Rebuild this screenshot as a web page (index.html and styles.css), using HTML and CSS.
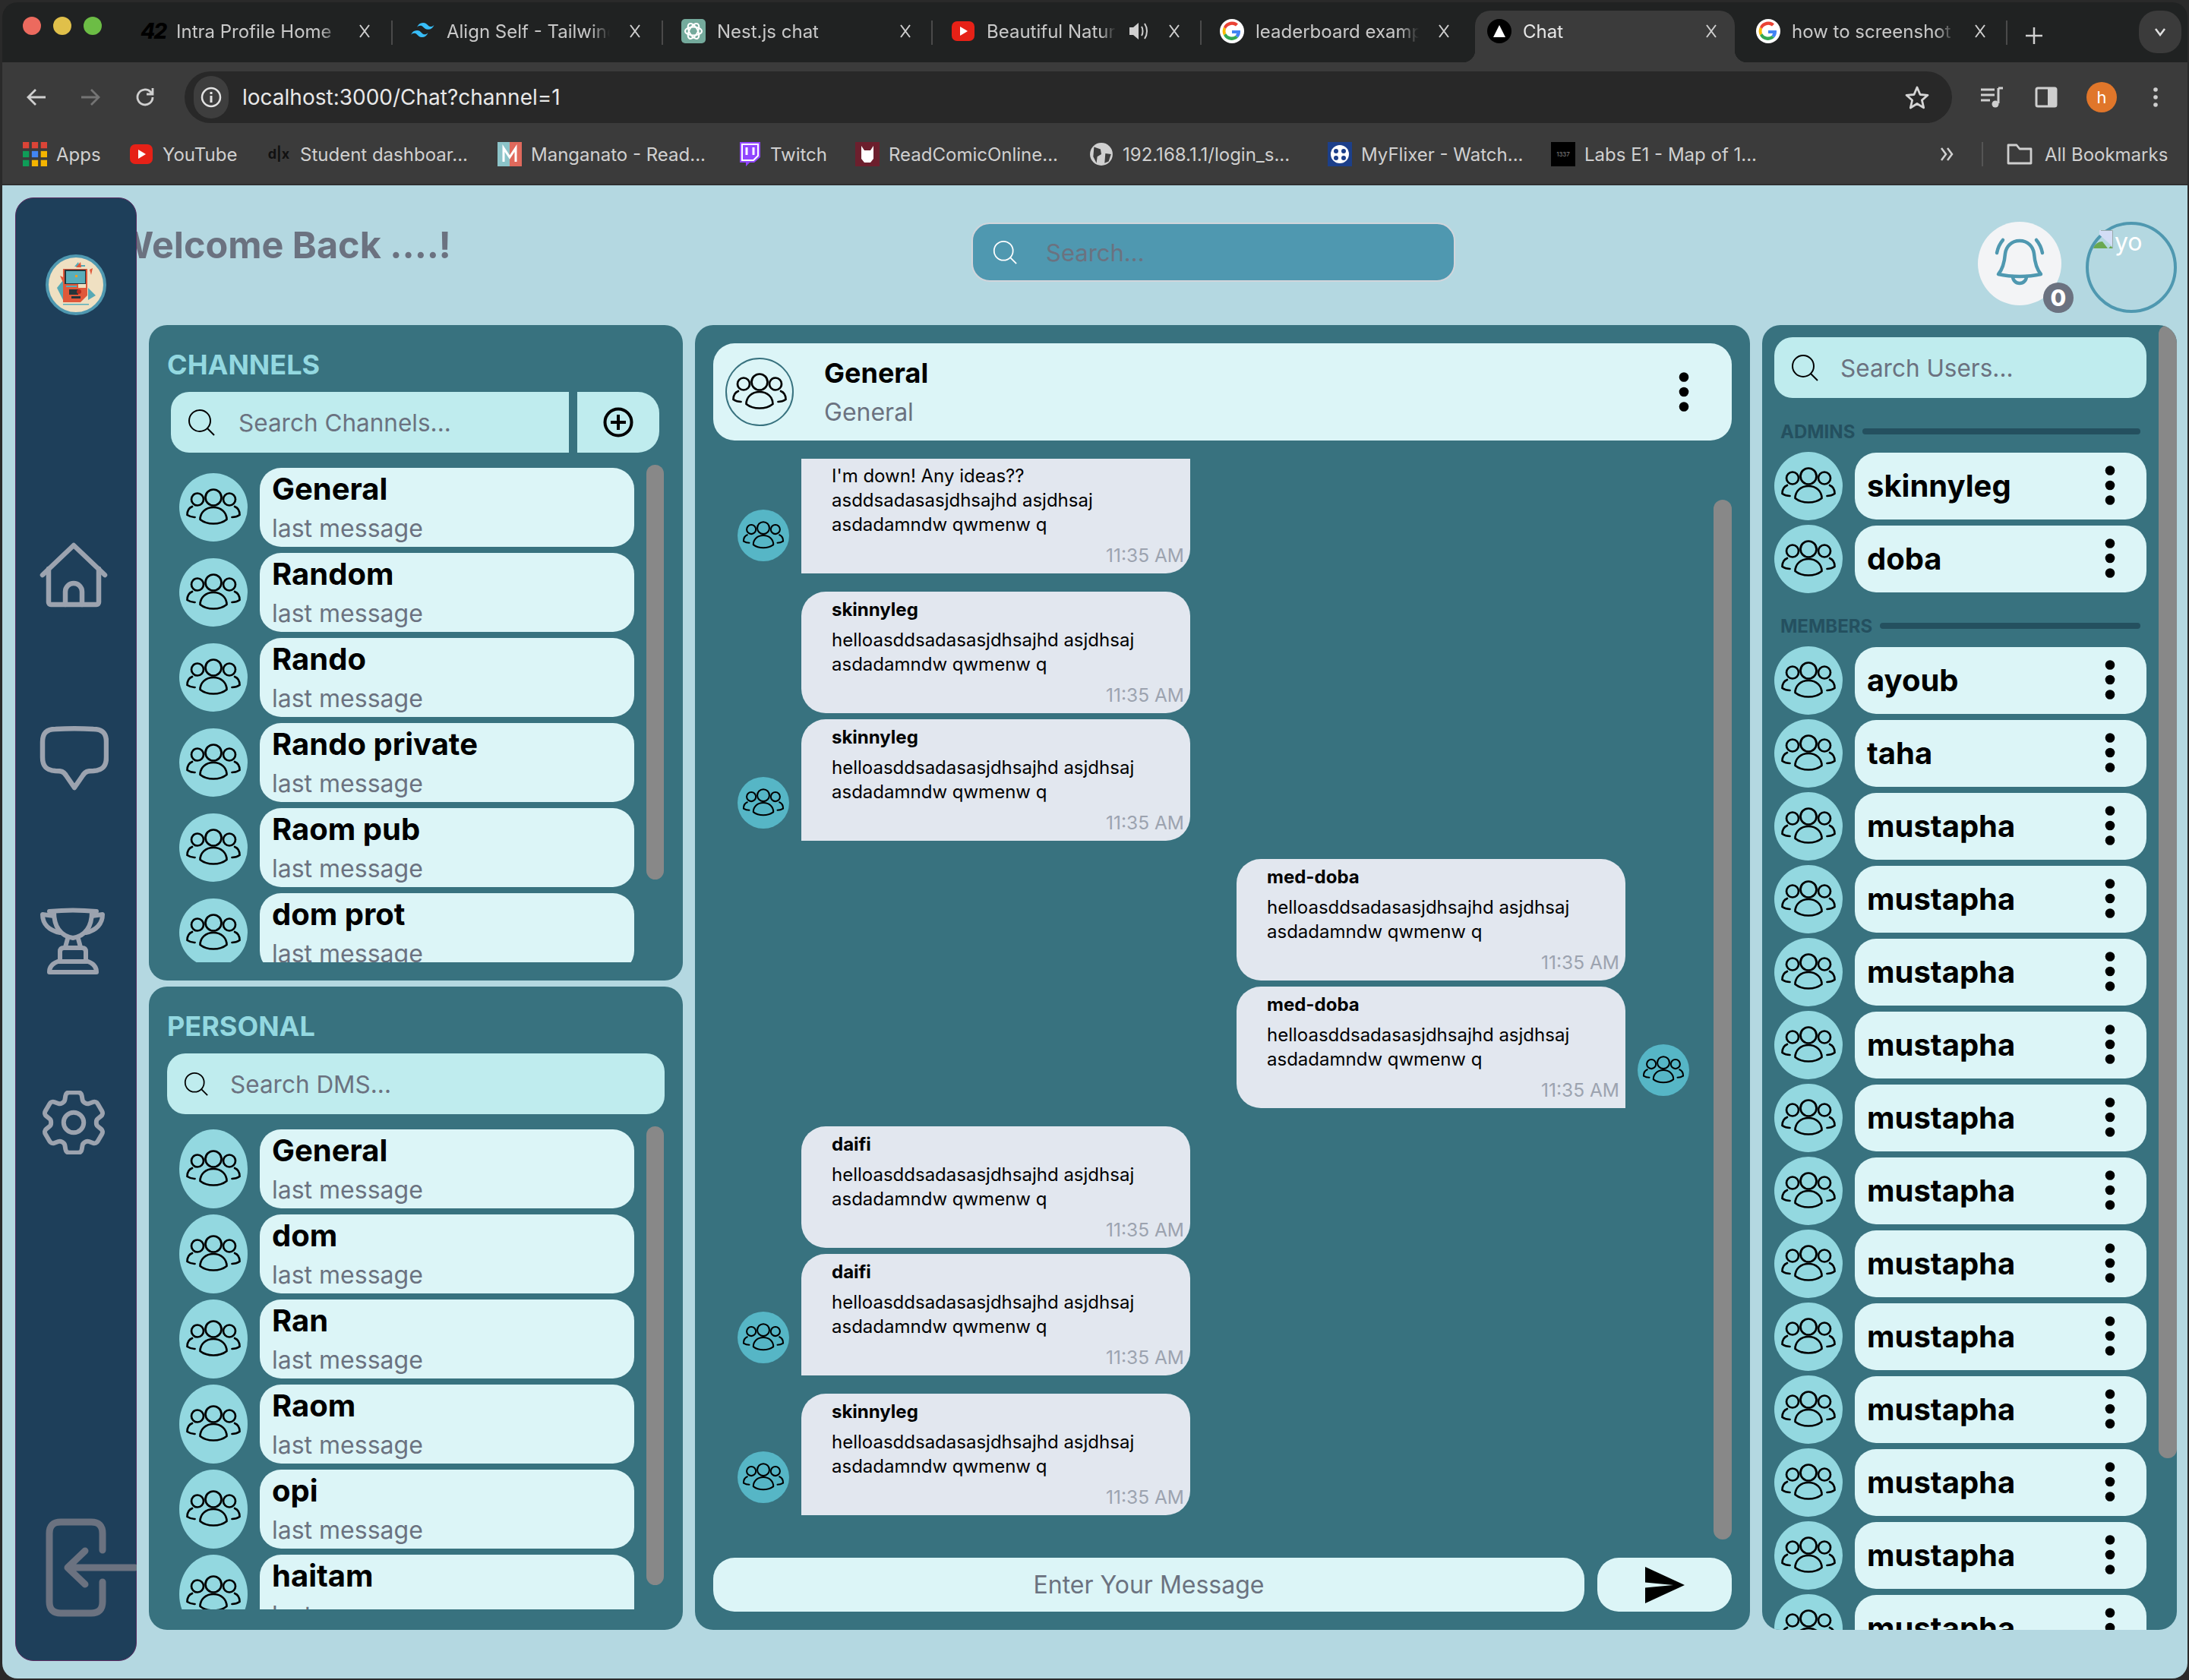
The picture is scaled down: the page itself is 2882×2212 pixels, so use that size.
FILE: index.html
```html
<!DOCTYPE html>
<html lang="en">
<head>
  <meta charset="UTF-8">
  <title>Chat</title>
  <link rel="stylesheet" href="styles.css">
</head>
<body>
  <!-- shared icons -->
  <svg class="defs" width="0" height="0">
    <symbol id="people" viewBox="0 0 90 90">
      <g fill="none" stroke="#000" stroke-width="2.7" stroke-linecap="round" stroke-linejoin="round">
        <circle cx="45" cy="32" r="10.5"/>
        <circle cx="24" cy="34.5" r="8"/>
        <circle cx="66" cy="34.5" r="8"/>
        <path d="M27.5 61c0-9 7-16 17.5-16s17.5 7 17.5 16c-5 4-11 5.5-17.5 5.5S32.5 65 27.5 61z"/>
        <path d="M17 44c-5 2-6.5 6-6.5 11 3 2 6 3 10 3"/>
        <path d="M73 44c5 2 6.5 6 6.5 11-3 2-6 3-10 3"/>
      </g>
    </symbol>
    <symbol id="search" viewBox="0 0 36 36">
      <circle cx="16" cy="16" r="14" fill="none" stroke="currentColor" stroke-width="2"/>
      <path d="M26 26l9 9" stroke="currentColor" stroke-width="2"/>
    </symbol>
    <symbol id="close" viewBox="0 0 14 18">
      <path d="M1 1l12 16M13 1L1 17" stroke="#cfcfcf" stroke-width="2"/>
    </symbol>
    <symbol id="google" viewBox="0 0 32 32">
      <circle cx="16" cy="16" r="16" fill="#fff"/>
      <path d="M16 15v4h6a6.5 6.5 0 0 1-1.5 3l3.5 2.5c2-2 3-5 3-7.500 0-.7 0-1.400-.2-2z" fill="#4285f4"/>
      <path d="M8 19a8.700 8.700 0 0 0 12.500 3l3.500 2.500A12 12 0 0 1 5 21.500z" fill="#34a853"/>
      <path d="M8 19a8.700 8.700 0 0 1 0-6L5 10.500a12 12 0 0 0 0 11z" fill="#fbbc05"/>
      <path d="M8 13a8.700 8.700 0 0 1 13-3.500L24 6.500A12 12 0 0 0 5 10.500z" fill="#ea4335"/>
    </symbol>
    <symbol id="youtube" viewBox="0 0 32 32">
      <rect x="1" y="3" width="30" height="26" rx="7" fill="#e62117"/>
      <path d="M12 10l10 6-10 6z" fill="#fff"/>
    </symbol>
    <symbol id="more" viewBox="0 0 14 52">
      <circle cx="7" cy="6.500" r="6.300"/>
      <circle cx="7" cy="26" r="6.300"/>
      <circle cx="7" cy="45.500" r="6.300"/>
    </symbol>
  </svg>

  <div class="window">
    <div class="tabbar">
      <div class="lights">
        <span class="light light-red"></span>
        <span class="light light-yellow"></span>
        <span class="light light-green"></span>
      </div>
      <div class="tab">
        <span class="favicon fav-42">42</span>
        <span class="tab-title">Intra Profile Home</span>
        <svg class="tab-close"><use href="#close"/></svg>
      </div>
      <div class="tab">
        <svg class="favicon" viewBox="0 0 32 32"><path d="M16 5c-4 0-6.500 2-8 6 1.500-2 3.500-2.700 5.500-2.200 1.100.3 2 1 2.800 1.900 1.400 1.400 3 3 6.200 3 4 0 6.500-2 8-6-1.500 2-3.500 2.700-5.500 2.200-1.100-.3-2-1-2.800-1.900C20.800 6.600 19.200 5 16 5zM8 15c-4 0-6.500 2-8 6 1.500-2 3.500-2.700 5.500-2.200 1.100.3 2 1 2.800 1.900C9.700 22.100 11.300 24 14.500 24c4 0 6.500-2 8-6-1.500 2-3.500 2.700-5.500 2.200-1.100-.3-2-1-2.800-1.900C12.800 16.900 11.200 15 8 15z" fill="#38bdf8"/></svg>
        <span class="tab-title">Align Self - Tailwind CSS</span>
        <svg class="tab-close"><use href="#close"/></svg>
      </div>
      <div class="tab tab-third">
        <svg class="favicon" viewBox="0 0 32 32"><rect width="32" height="32" rx="5" fill="#74aa9c"/><g fill="none" stroke="#fff" stroke-width="2"><ellipse cx="16" cy="16" rx="11" ry="5.500"/><ellipse cx="16" cy="16" rx="11" ry="5.500" transform="rotate(60 16 16)"/><ellipse cx="16" cy="16" rx="11" ry="5.500" transform="rotate(120 16 16)"/></g></svg>
        <span class="tab-title">Nest.js chat</span>
        <svg class="tab-close"><use href="#close"/></svg>
      </div>
      <div class="tab tab-fourth">
        <svg class="favicon"><use href="#youtube"/></svg>
        <span class="tab-title tab-title-short">Beautiful Nature Video</span>
        <svg class="tab-sound" viewBox="0 0 26 32"><path d="M2 11h5l7-6v22l-7-6H2z" fill="#cfcfcf"/><path d="M18 10c2 3 2 9 0 12M22 6c4 6 4 14 0 20" fill="none" stroke="#cfcfcf" stroke-width="2"/></svg>
        <svg class="tab-close tab-close-tight"><use href="#close"/></svg>
      </div>
      <div class="tab tab-nosep">
        <svg class="favicon"><use href="#google"/></svg>
        <span class="tab-title">leaderboard example</span>
        <svg class="tab-close"><use href="#close"/></svg>
      </div>
      <div class="tab tab-active">
        <svg class="favicon" viewBox="0 0 32 32"><circle cx="16" cy="16" r="16" fill="#000"/><path d="M16 8l8 16H8z" fill="#fff"/></svg>
        <span class="tab-title">Chat</span>
        <svg class="tab-close"><use href="#close"/></svg>
      </div>
      <div class="tab tab-last">
        <svg class="favicon"><use href="#google"/></svg>
        <span class="tab-title">how to screenshot</span>
        <svg class="tab-close"><use href="#close"/></svg>
      </div>
      <svg class="tab-new" viewBox="0 0 22 22"><path d="M11 0v22M0 11h22" stroke="#d0d0d0" stroke-width="2.500"/></svg>
      <div class="tab-list"><svg width="16" height="12" viewBox="0 0 16 12"><path d="M2 2l6 8 6-8" fill="none" stroke="#e0e0e0" stroke-width="2.500"/></svg></div>
    </div>

    <div class="toolbar">
      <svg class="nav-icon" viewBox="0 0 28 28"><path d="M26 14H3M13 4L3 14l10 10" fill="none" stroke="#cfcfcf" stroke-width="2.800"/></svg>
      <svg class="nav-icon nav-forward" viewBox="0 0 28 28"><path d="M2 14h23M15 4l10 10-10 10" fill="none" stroke="#747474" stroke-width="2.800"/></svg>
      <svg class="nav-icon nav-reload" viewBox="0 0 28 28"><path d="M24 14a10 10 0 1 1-3-7.200L24 10M24 2v8h-8" fill="none" stroke="#cfcfcf" stroke-width="2.800"/></svg>
      <div class="address">
        <span class="site-info"><svg width="28" height="28" viewBox="0 0 28 28"><circle cx="14" cy="14" r="12" fill="none" stroke="#e2e2e2" stroke-width="2.500"/><path d="M14 12v9M14 7v3" stroke="#e2e2e2" stroke-width="3"/></svg></span>
        <span class="url">localhost:3000/Chat?channel=1</span>
        <svg class="star" viewBox="0 0 32 32"><path d="M16 3l4 9.500 10 .8-7.600 6.600 2.300 10L16 24.500 7.300 30l2.300-10L2 13.300l10-.8z" fill="none" stroke="#d5d5d5" stroke-width="2.800" stroke-linejoin="round"/></svg>
      </div>
      <svg class="tool-icon" viewBox="0 0 32 32"><path d="M2 6h18M2 13h18M2 20h12" stroke="#cfcfcf" stroke-width="3"/><path d="M25 4v20" stroke="#cfcfcf" stroke-width="3"/><path d="M25 4h6" stroke="#cfcfcf" stroke-width="3"/><circle cx="21" cy="25" r="4.500" fill="#cfcfcf"/></svg>
      <svg class="tool-icon tool-panel" viewBox="0 0 32 32"><rect x="3" y="4" width="26" height="24" rx="2" fill="none" stroke="#cfcfcf" stroke-width="3"/><rect x="18" y="4" width="11" height="24" fill="#cfcfcf"/></svg>
      <span class="profile">h</span>
      <svg class="tool-menu" viewBox="0 0 6 26"><circle cx="3" cy="3" r="2.800"/><circle cx="3" cy="13" r="2.800"/><circle cx="3" cy="23" r="2.800"/></svg>
    </div>

    <div class="bookmarks">
      <div class="bookmark">
        <svg class="bm-icon" viewBox="0 0 27 27"><g fill="#db4437"><rect width="7" height="7"/><rect x="10" width="7" height="7"/><rect x="20" width="7" height="7"/></g><g fill="#0f9d58"><rect y="10" width="7" height="7"/></g><rect x="10" y="10" width="7" height="7" fill="#4285f4"/><rect x="20" y="10" width="7" height="7" fill="#f4b400"/><rect y="20" width="7" height="7" fill="#0f9d58"/><rect x="10" y="20" width="7" height="7" fill="#f4b400"/><rect x="20" y="20" width="7" height="7" fill="#f4b400"/></svg>
        Apps
      </div>
      <div class="bookmark"><svg class="bm-icon"><use href="#youtube"/></svg>YouTube</div>
      <div class="bookmark"><span class="bm-icon bm-dlx">d|x</span>Student dashboar...</div>
      <div class="bookmark">
        <svg class="bm-icon" viewBox="0 0 32 32"><rect width="16" height="32" fill="#8cc4c9"/><rect x="16" width="16" height="32" fill="#e0695c"/><path d="M8 26V8l8 12 8-12v18" fill="none" stroke="#fff" stroke-width="3"/></svg>
        Manganato - Read...
      </div>
      <div class="bookmark">
        <svg class="bm-icon" viewBox="0 0 30 32"><path d="M3 0h27v20l-8 7h-6l-5 5v-5H3z" fill="#9146ff"/><path d="M12 7v10M21 7v10" stroke="#fff" stroke-width="3"/><path d="M6 3h21v15l-6 6H6z" fill="none" stroke="#fff" stroke-width="2"/></svg>
        Twitch
      </div>
      <div class="bookmark">
        <svg class="bm-icon" viewBox="0 0 32 32"><rect width="32" height="32" fill="#6c1f2d"/><path d="M8 5l4 6h8l4-6v17l-4 5h-8l-4-5z" fill="#fff"/></svg>
        ReadComicOnline...
      </div>
      <div class="bookmark">
        <svg class="bm-icon" viewBox="0 0 30 30"><circle cx="15" cy="15" r="14" fill="#d0d0d0"/><path d="M6 6l8 3 1 6-5 3-1 8-4-8zM20 14l7 1-3 9-5 2z" fill="#3c3c3c"/></svg>
        192.168.1.1/login_s...
      </div>
      <div class="bookmark">
        <svg class="bm-icon" viewBox="0 0 32 32"><rect width="32" height="32" fill="#1c3f8a"/><circle cx="16" cy="16" r="12" fill="#fff"/><circle cx="11" cy="12" r="3" fill="#1c3f8a"/><circle cx="21" cy="12" r="3" fill="#1c3f8a"/><circle cx="11" cy="21" r="3" fill="#1c3f8a"/><circle cx="21" cy="21" r="3" fill="#1c3f8a"/></svg>
        MyFlixer - Watch...
      </div>
      <div class="bookmark"><span class="bm-icon bm-labs">1337</span>Labs E1 - Map of 1...</div>
      <div class="bookmarks-end">
        <svg class="bm-more" viewBox="0 0 20 20"><path d="M3 2l6 8-6 8M11 2l6 8-6 8" fill="none" stroke="#d0d0d0" stroke-width="2.500"/></svg>
        <span class="bm-sep"></span>
        <svg class="bm-folder" viewBox="0 0 34 30"><path d="M2 27V3h11l4 5h15v19z" fill="none" stroke="#cfcfcf" stroke-width="2.800" stroke-linejoin="round"/></svg>
        All Bookmarks
      </div>
    </div>

    <div class="app">
      <nav class="sidebar">
        <svg class="logo" viewBox="0 0 80 80">
          <circle cx="40" cy="40" r="38" fill="#efe0c2" stroke="#4f98b0" stroke-width="4"/>
          <path d="M15 44l8-10v26zM56 44l10 10-10 6zM38 16l5-6 2 6zM46 14h6v2h-6z" fill="#56a9b5"/>
          <path d="M40 17l6-7 1 7zM58 20l4-2-2 9zM19 28l4 2v7z" fill="#e0583a"/>
          <path d="M23 19h32v35l-9 9H23z" fill="#e0583a"/>
          <rect x="25" y="20" width="28" height="19" fill="#26353a"/>
          <rect x="27" y="22" width="25" height="16" fill="#58aebb"/>
          <rect x="39" y="27" width="3" height="3" fill="#f0a020"/>
          <rect x="27" y="41" width="14" height="2" fill="#58aebb"/>
          <rect x="43" y="39" width="10" height="5" fill="#efe0c2"/>
          <rect x="31" y="46" width="12" height="7" fill="#26353a"/>
          <circle cx="44" cy="49" r="3" fill="#b52a1c"/>
          <rect x="34" y="55" width="12" height="3" fill="#26353a"/>
          <rect x="23" y="65" width="34" height="1.500" fill="#58aebb"/>
        </svg>
        <svg class="nav-item nav-home" viewBox="0 0 92 88"><g fill="none" stroke="#9ca3af" stroke-width="6.500" stroke-linecap="round" stroke-linejoin="round"><path d="M5 44L46 5l41 39"/><path d="M13 36v44a3 3 0 0 0 3 3h60a3 3 0 0 0 3-3V36"/><path d="M35 83V66a11 11 0 0 1 22 0v17"/></g></svg>
        <svg class="nav-item nav-chat" viewBox="0 0 92 88"><path d="M22 5C40 4 54 4 72 5c12 0 17 6 17 17v20c0 12-5 17-17 18-8 0-11 1-14 6L47 82 36 66c-3-5-6-6-14-6C10 59 5 54 5 42V22C5 11 10 5 22 5z" fill="none" stroke="#9ca3af" stroke-width="6.500" stroke-linejoin="round"/></svg>
        <svg class="nav-item nav-trophy" viewBox="0 0 92 92"><g fill="none" stroke="#9ca3af" stroke-width="6" stroke-linecap="round" stroke-linejoin="round"><path d="M14 6c20-2 42-2 62 0M20 6c0 20 8 32 25 35 17-3 25-15 25-35"/><path d="M20 12L5 10c0 12 8 21 23 24M70 12l14-2c0 12-8 21-22 24"/><path d="M38 42l-3 11M52 42l3 11"/><path d="M28 72V59q0-5 5-5h24q5 0 5 5v13"/><path d="M14 86q0-10 11-14h40q11 4 11 14z"/></g></svg>
        <svg class="nav-item nav-gear" viewBox="2.500 2.500 19 19"><g fill="none" stroke="#9ca3af" stroke-width="1.350" stroke-linejoin="round"><path d="M9.594 3.940c.09-.542.56-.94 1.110-.94h2.593c.55 0 1.020.398 1.110.94l.213 1.281c.063.374.313.686.645.870.074.04.147.083.22.127.324.196.72.257 1.075.124l1.217-.456a1.125 1.125 0 011.370.49l1.296 2.247a1.125 1.125 0 01-.26 1.431l-1.003.827c-.293.24-.438.613-.431.992a6.759 6.759 0 010 .255c-.007.378.138.75.43.99l1.005.828c.424.35.534.954.26 1.430l-1.298 2.247a1.125 1.125 0 01-1.369.491l-1.217-.456c-.355-.133-.75-.072-1.076.124a6.570 6.570 0 01-.22.128c-.331.183-.581.495-.644.869l-.213 1.280c-.09.543-.56.941-1.110.941h-2.594c-.55 0-1.020-.398-1.110-.94l-.213-1.281c-.062-.374-.312-.686-.644-.87a6.520 6.520 0 01-.22-.127c-.325-.196-.72-.257-1.076-.124l-1.217.456a1.125 1.125 0 01-1.369-.49l-1.297-2.247a1.125 1.125 0 01.26-1.431l1.004-.827c.292-.24.437-.613.43-.992a6.932 6.932 0 010-.255c.007-.378-.138-.75-.43-.99l-1.004-.828a1.125 1.125 0 01-.26-1.430l1.297-2.247a1.125 1.125 0 011.370-.491l1.216.456c.356.133.751.072 1.076-.124.072-.044.146-.087.22-.128.332-.183.582-.495.644-.869l.214-1.281z"/><circle cx="12" cy="12" r="3"/></g></svg>
        <svg class="nav-logout" viewBox="0 0 120 130"><g fill="none" stroke="#6b7280" stroke-width="9" stroke-linecap="round" stroke-linejoin="round"><path d="M75 42V20Q75 5 60 5H20Q5 5 5 20v90q0 15 15 15h40q15 0 15-15V84"/><path d="M118 65H30M52 43L29 65l23 22"/></g></svg>
      </nav>

      <main class="main">
        <header class="topbar">
          <h1 class="welcome">Welcome Back ....!</h1>
          <label class="top-search">
            <svg class="top-search-icon"><use href="#search"/></svg>
            <input type="text" placeholder="Search...">
          </label>
          <div class="top-actions">
            <div class="bell">
              <svg width="110" height="110" viewBox="0 0 110 110"><g fill="none" stroke="#4f98b0" stroke-width="4.500" stroke-linecap="round" stroke-linejoin="round"><path d="M55 25c-11 0-18 8-19 17-1 12-3 20-9 27 17 4 39 4 56 0-6-7-8-15-9-27-1-9-8-17-19-17z"/><path d="M46 72a9 9 0 0 0 18 0"/><path d="M25 41q2-10 8-17M85 41q-2-10-8-17"/></g></svg>
              <span class="bell-count">0</span>
            </div>
            <div class="user-ring">
              <svg class="broken-img" viewBox="0 0 26 24"><path d="M8 0h18v22L8 6z" fill="#d3ddf5"/><path d="M0 24c2-6 7-9 12-9l7 9z" fill="#6aa84f"/><path d="M20 24l3-3 3 3z" fill="#6aa84f"/><path d="M10 .5h15.500V24" fill="none" stroke="#9aa" stroke-width="1"/></svg>
              <span class="user-alt">yo</span>
            </div>
          </div>
        </header>

        <div class="panels">
          <div class="left-col">
            <section class="panel panel-channels">
              <h2 class="panel-title">CHANNELS</h2>
              <div class="channel-tools">
                <label class="search search-channels">
                  <svg class="search-icon"><use href="#search"/></svg>
                  <input type="text" placeholder="Search Channels...">
                </label>
                <button class="add-channel" type="button">
                  <svg width="40" height="40" viewBox="0 0 40 40"><circle cx="20" cy="20" r="17.500" fill="none" stroke="#000" stroke-width="4"/><path d="M20 10v20M10 20h20" stroke="#000" stroke-width="4"/></svg>
                </button>
              </div>
              <div class="list list-channels">
                <div class="row"><span class="avatar"><svg><use href="#people"/></svg></span><div class="card"><div class="card-name">General</div><div class="card-last">last message</div></div></div>
                <div class="row"><span class="avatar"><svg><use href="#people"/></svg></span><div class="card"><div class="card-name">Random</div><div class="card-last">last message</div></div></div>
                <div class="row"><span class="avatar"><svg><use href="#people"/></svg></span><div class="card"><div class="card-name">Rando</div><div class="card-last">last message</div></div></div>
                <div class="row"><span class="avatar"><svg><use href="#people"/></svg></span><div class="card"><div class="card-name">Rando private</div><div class="card-last">last message</div></div></div>
                <div class="row"><span class="avatar"><svg><use href="#people"/></svg></span><div class="card"><div class="card-name">Raom pub</div><div class="card-last">last message</div></div></div>
                <div class="row"><span class="avatar"><svg><use href="#people"/></svg></span><div class="card"><div class="card-name">dom prot</div><div class="card-last">last message</div></div></div>
                <span class="thumb thumb-channels"></span>
              </div>
            </section>

            <section class="panel panel-personal">
              <h2 class="panel-title">PERSONAL</h2>
              <label class="search search-dms">
                <svg class="search-icon search-icon-small"><use href="#search"/></svg>
                <input type="text" placeholder="Search DMS...">
              </label>
              <div class="list list-dms">
                <div class="row"><span class="avatar avatar-tall"><svg><use href="#people"/></svg></span><div class="card"><div class="card-name">General</div><div class="card-last">last message</div></div></div>
                <div class="row"><span class="avatar avatar-tall"><svg><use href="#people"/></svg></span><div class="card"><div class="card-name">dom</div><div class="card-last">last message</div></div></div>
                <div class="row"><span class="avatar avatar-tall"><svg><use href="#people"/></svg></span><div class="card"><div class="card-name">Ran</div><div class="card-last">last message</div></div></div>
                <div class="row"><span class="avatar avatar-tall"><svg><use href="#people"/></svg></span><div class="card"><div class="card-name">Raom</div><div class="card-last">last message</div></div></div>
                <div class="row"><span class="avatar avatar-tall"><svg><use href="#people"/></svg></span><div class="card"><div class="card-name">opi</div><div class="card-last">last message</div></div></div>
                <div class="row"><span class="avatar avatar-tall"><svg><use href="#people"/></svg></span><div class="card"><div class="card-name">haitam</div><div class="card-last">last message</div></div></div>
                <span class="thumb thumb-dms"></span>
              </div>
            </section>
          </div>

          <section class="panel panel-chat">
            <div class="chat-head">
              <span class="chat-head-avatar"><svg><use href="#people"/></svg></span>
              <div class="chat-head-text">
                <div class="chat-head-name">General</div>
                <div class="chat-head-sub">General</div>
              </div>
              <svg class="dots dots-head"><use href="#more"/></svg>
            </div>

            <div class="messages">
              <div class="msg msg-cut">
                <span class="msg-avatar"><svg><use href="#people"/></svg></span>
                <div class="bubble bubble-cut">
                  <p>I'm down! Any ideas?? asddsadasasjdhsajhd asjdhsaj asdadamndw qwmenw q</p>
                  <time>11:35 AM</time>
                </div>
              </div>
              <div class="msg msg-group">
                <span class="msg-avatar msg-avatar-none"></span>
                <div class="bubble">
                  <h4>skinnyleg</h4>
                  <p>helloasddsadasasjdhsajhd asjdhsaj asdadamndw qwmenw q</p>
                  <time>11:35 AM</time>
                </div>
              </div>
              <div class="msg">
                <span class="msg-avatar"><svg><use href="#people"/></svg></span>
                <div class="bubble bubble-tail">
                  <h4>skinnyleg</h4>
                  <p>helloasddsadasasjdhsajhd asjdhsaj asdadamndw qwmenw q</p>
                  <time>11:35 AM</time>
                </div>
              </div>
              <div class="msg msg-group msg-mine">
                <span class="msg-avatar msg-avatar-none"></span>
                <div class="bubble">
                  <h4>med-doba</h4>
                  <p>helloasddsadasasjdhsajhd asjdhsaj asdadamndw qwmenw q</p>
                  <time>11:35 AM</time>
                </div>
              </div>
              <div class="msg msg-mine">
                <span class="msg-avatar"><svg><use href="#people"/></svg></span>
                <div class="bubble bubble-tail">
                  <h4>med-doba</h4>
                  <p>helloasddsadasasjdhsajhd asjdhsaj asdadamndw qwmenw q</p>
                  <time>11:35 AM</time>
                </div>
              </div>
              <div class="msg msg-group">
                <span class="msg-avatar msg-avatar-none"></span>
                <div class="bubble">
                  <h4>daifi</h4>
                  <p>helloasddsadasasjdhsajhd asjdhsaj asdadamndw qwmenw q</p>
                  <time>11:35 AM</time>
                </div>
              </div>
              <div class="msg">
                <span class="msg-avatar"><svg><use href="#people"/></svg></span>
                <div class="bubble bubble-tail">
                  <h4>daifi</h4>
                  <p>helloasddsadasasjdhsajhd asjdhsaj asdadamndw qwmenw q</p>
                  <time>11:35 AM</time>
                </div>
              </div>
              <div class="msg msg-group">
                <span class="msg-avatar"><svg><use href="#people"/></svg></span>
                <div class="bubble bubble-tail">
                  <h4>skinnyleg</h4>
                  <p>helloasddsadasasjdhsajhd asjdhsaj asdadamndw qwmenw q</p>
                  <time>11:35 AM</time>
                </div>
              </div>
              <span class="thumb thumb-chat"></span>
            </div>

            <form class="composer">
              <input type="text" placeholder="Enter Your Message">
              <button type="button">
                <svg width="52" height="48" viewBox="0 0 52 48"><path d="M0 0l52 24L0 48V27.500L37 24 0 20.500z" fill="#000"/></svg>
              </button>
            </form>
          </section>

          <aside class="panel panel-users">
            <label class="search search-users">
              <svg class="search-icon"><use href="#search"/></svg>
              <input type="text" placeholder="Search Users...">
            </label>
            <div class="group-label"><span>ADMINS</span><i></i></div>
            <div class="user-rows">
              <div class="user-row"><span class="avatar"><svg><use href="#people"/></svg></span><div class="user-card">skinnyleg<svg class="dots"><use href="#more"/></svg></div></div>
              <div class="user-row"><span class="avatar"><svg><use href="#people"/></svg></span><div class="user-card">doba<svg class="dots"><use href="#more"/></svg></div></div>
            </div>
            <div class="group-label"><span>MEMBERS</span><i></i></div>
            <div class="user-rows">
              <div class="user-row"><span class="avatar"><svg><use href="#people"/></svg></span><div class="user-card">ayoub<svg class="dots"><use href="#more"/></svg></div></div>
              <div class="user-row"><span class="avatar"><svg><use href="#people"/></svg></span><div class="user-card">taha<svg class="dots"><use href="#more"/></svg></div></div>
              <div class="user-row"><span class="avatar"><svg><use href="#people"/></svg></span><div class="user-card">mustapha<svg class="dots"><use href="#more"/></svg></div></div>
              <div class="user-row"><span class="avatar"><svg><use href="#people"/></svg></span><div class="user-card">mustapha<svg class="dots"><use href="#more"/></svg></div></div>
              <div class="user-row"><span class="avatar"><svg><use href="#people"/></svg></span><div class="user-card">mustapha<svg class="dots"><use href="#more"/></svg></div></div>
              <div class="user-row"><span class="avatar"><svg><use href="#people"/></svg></span><div class="user-card">mustapha<svg class="dots"><use href="#more"/></svg></div></div>
              <div class="user-row"><span class="avatar"><svg><use href="#people"/></svg></span><div class="user-card">mustapha<svg class="dots"><use href="#more"/></svg></div></div>
              <div class="user-row"><span class="avatar"><svg><use href="#people"/></svg></span><div class="user-card">mustapha<svg class="dots"><use href="#more"/></svg></div></div>
              <div class="user-row"><span class="avatar"><svg><use href="#people"/></svg></span><div class="user-card">mustapha<svg class="dots"><use href="#more"/></svg></div></div>
              <div class="user-row"><span class="avatar"><svg><use href="#people"/></svg></span><div class="user-card">mustapha<svg class="dots"><use href="#more"/></svg></div></div>
              <div class="user-row"><span class="avatar"><svg><use href="#people"/></svg></span><div class="user-card">mustapha<svg class="dots"><use href="#more"/></svg></div></div>
              <div class="user-row"><span class="avatar"><svg><use href="#people"/></svg></span><div class="user-card">mustapha<svg class="dots"><use href="#more"/></svg></div></div>
              <div class="user-row"><span class="avatar"><svg><use href="#people"/></svg></span><div class="user-card">mustapha<svg class="dots"><use href="#more"/></svg></div></div>
              <div class="user-row"><span class="avatar"><svg><use href="#people"/></svg></span><div class="user-card">mustapha<svg class="dots"><use href="#more"/></svg></div></div>
            </div>
            <span class="thumb thumb-users"></span>
          </aside>
        </div>
      </main>
    </div>
  </div>
</body>
</html>
```

FILE: styles.css
```css
* {
  margin: 0;
  padding: 0;
  box-sizing: border-box;
}

html, body {
  height: 100%;
  overflow: hidden;
}

body {
  background-color: #2a2a2a;
  font-family: "Inter", "Liberation Sans", sans-serif;
}

.defs {
  position: absolute;
}

input {
  font-family: inherit;
  border: none;
  outline: none;
  background: transparent;
}

input::placeholder {
  color: #6b7280;
  opacity: 1;
}

button {
  border: none;
  cursor: pointer;
}

/* Browser frame */
.window {
  height: 2207px;
  margin: 3px 2px 2px 3px;
  border-radius: 20px;
  overflow: hidden;
  display: flex;
  flex-direction: column;
}

.tabbar {
  height: 79px;
  flex: none;
  background-color: #202222;
  display: flex;
  align-items: flex-end;
  color: #c9c9c9;
  font-size: 24px;
}

.lights {
  width: 158px;
  height: 68px;
  padding: 0 0 28px 27px;
  display: flex;
  align-items: center;
  gap: 16px;
}

.light {
  width: 24px;
  height: 24px;
  border-radius: 50%;
}

.light-red { background-color: #ec6a5e; }
.light-yellow { background-color: #e0c04a; }
.light-green { background-color: #6cbd45; }

.tab {
  position: relative;
  width: 356px;
  height: 68px;
  flex: none;
  padding: 0 0 14px 24px;
  display: flex;
  align-items: center;
}

.tab-third {
  width: 355px;
}

.tab-fourth {
  width: 354px;
}

.tab::after {
  content: "";
  position: absolute;
  right: 0;
  top: 13px;
  width: 2px;
  height: 32px;
  background-color: #4a4a4a;
}

.tab-nosep::after,
.tab-active::after {
  display: none;
}

.tab-active {
  width: 342px;
  margin: 0 10px 0 4px;
  padding-left: 16px;
  background-color: #3b3b3b;
  border-radius: 20px 20px 0 0;
  color: #e8e8e8;
}

.tab-active::before {
  content: "";
  position: absolute;
  left: -16px;
  right: -16px;
  bottom: 0;
  height: 16px;
  z-index: 0;
  background:
    radial-gradient(circle at 0 0, transparent 16px, #3b3b3b 16.500px) left bottom / 16px 16px no-repeat,
    radial-gradient(circle at 100% 0, transparent 16px, #3b3b3b 16.500px) right bottom / 16px 16px no-repeat;
}

.tab-last {
  width: 349px;
  padding-left: 18px;
}

.favicon {
  width: 32px;
  height: 32px;
  flex: none;
}

.fav-42 {
  color: #000;
  font-weight: 800;
  font-size: 28px;
  font-style: italic;
  line-height: 32px;
  letter-spacing: -2px;
}

.tab-title {
  width: 215px;
  margin-left: 15px;
  flex: none;
  white-space: nowrap;
  overflow: hidden;
  -webkit-mask-image: linear-gradient(to right, #000 88%, transparent);
  mask-image: linear-gradient(to right, #000 88%, transparent);
}

.tab-title-short {
  width: 170px;
}

.tab-sound {
  width: 26px;
  height: 32px;
  margin-left: 16px;
  flex: none;
}

.tab-close {
  width: 14px;
  height: 18px;
  margin-left: 26px;
  flex: none;
}

.tab-close-tight {
  margin-left: 28px;
}

.tab-new {
  width: 22px;
  height: 22px;
  margin: 0 0 24px 24px;
  flex: none;
}

.tab-list {
  width: 56px;
  height: 56px;
  margin: 0 8px 12px auto;
  border-radius: 24px;
  background-color: #3b3b3b;
  display: flex;
  align-items: center;
  justify-content: center;
}

.toolbar {
  height: 92px;
  flex: none;
  background-color: #3b3b3b;
  display: flex;
  align-items: center;
}

.nav-icon {
  width: 28px;
  height: 28px;
  margin-left: 31px;
  flex: none;
}

.nav-forward {
  margin-left: 43px;
}

.nav-reload {
  margin-left: 44px;
}

.address {
  width: 2327px;
  height: 68px;
  margin-left: 38px;
  flex: none;
  padding: 0 30px 0 12px;
  border-radius: 34px;
  background-color: #282828;
  display: flex;
  align-items: center;
}

.site-info {
  width: 46px;
  height: 56px;
  border-radius: 28px;
  background-color: #3e3e3e;
  display: flex;
  align-items: center;
  justify-content: center;
}

.url {
  margin-left: 18px;
  color: #e8e8e8;
  font-size: 28px;
}

.star {
  width: 32px;
  height: 32px;
  margin-left: auto;
}

.tool-icon {
  width: 32px;
  height: 32px;
  margin-left: 36px;
  flex: none;
}

.tool-panel {
  margin-left: 40px;
}

.profile {
  width: 40px;
  height: 40px;
  margin-left: 37px;
  border-radius: 50%;
  background-color: #e0762a;
  color: #fff;
  font-size: 22px;
  line-height: 40px;
  text-align: center;
}

.tool-menu {
  width: 6px;
  height: 26px;
  margin-left: 48px;
  fill: #cfcfcf;
}

.bookmarks {
  height: 70px;
  flex: none;
  padding: 0 0 10px 27px;
  background-color: #3b3b3b;
  border-bottom: 2px solid #2f2f2f;
  color: #d0d0d0;
  font-size: 24px;
  display: grid;
  grid-template-columns: 140px 181px 304px 315px 156px 308px 314px 294px 511px 1fr;
  align-items: center;
}

.bookmark {
  display: flex;
  align-items: center;
  gap: 12px;
  white-space: nowrap;
}

.bm-icon {
  width: 32px;
  height: 32px;
  flex: none;
}

.bm-dlx {
  color: #111;
  font-size: 18px;
  font-weight: 700;
  line-height: 32px;
  text-align: center;
}

.bm-labs {
  background-color: #000;
  color: #888;
  font-size: 8px;
  line-height: 32px;
  text-align: center;
}

.bookmarks-end {
  display: flex;
  align-items: center;
  white-space: nowrap;
}

.bm-more {
  width: 20px;
  height: 20px;
  flex: none;
}

.bm-sep {
  width: 2px;
  height: 32px;
  margin: 0 31px 0 36px;
  background-color: #555;
}

.bm-folder {
  width: 34px;
  height: 30px;
  margin-right: 16px;
  flex: none;
}

/* Page */
.app {
  flex: 1;
  min-height: 0;
  background-color: #b4d8e1;
  display: flex;
  align-items: flex-start;
}

.sidebar {
  position: relative;
  z-index: 2;
  width: 160px;
  height: 1927px;
  margin: 16px 0 0 17px;
  flex: none;
  background-color: #1e3f5a;
  border: 1px solid #5b2c62;
  border-radius: 24px;
  display: flex;
  flex-direction: column;
  align-items: center;
}

.logo {
  width: 80px;
  height: 80px;
  margin-top: 74px;
}

.nav-item {
  margin-right: 6px;
  flex: none;
}

.nav-home {
  width: 92px;
  height: 88px;
  margin-top: 298px;
}

.nav-chat {
  width: 92px;
  height: 88px;
  margin-top: 154px;
}

.nav-trophy {
  width: 92px;
  height: 92px;
  margin-top: 151px;
}

.nav-gear {
  width: 84px;
  height: 84px;
  margin-top: 150px;
}

.nav-logout {
  width: 120px;
  height: 130px;
  margin: auto -1px 57px 0;
  align-self: flex-end;
}

.main {
  width: 2670px;
  margin: 16px 0 0 16px;
  flex: none;
}

.topbar {
  height: 168px;
  padding-top: 32px;
  display: grid;
  grid-template-columns: 1083px 637px 1fr;
  align-items: start;
}

.welcome {
  margin: 2px 0 0 -44px;
  color: #6b7280;
  font-size: 48.500px;
  font-weight: 700;
  line-height: 58px;
  white-space: nowrap;
}

.top-search {
  height: 78px;
  margin-top: 1px;
  padding-left: 26px;
  background-color: #4f98b0;
  border: 2px solid #d1d5db;
  border-radius: 24px;
  display: flex;
  align-items: center;
}

.top-search-icon {
  width: 32px;
  height: 32px;
  color: #fff;
  flex: none;
}

.top-search input {
  flex: 1;
  min-width: 0;
  margin-left: 38px;
  font-size: 31px;
}

.top-actions {
  display: flex;
  justify-content: flex-end;
  gap: 32px;
}

.bell {
  position: relative;
  width: 110px;
  height: 110px;
  border-radius: 50%;
  background-color: #f3f4f6;
}

.bell-count {
  position: absolute;
  left: 86px;
  top: 80px;
  width: 40px;
  height: 40px;
  border-radius: 50%;
  background-color: #6b7280;
  color: #fff;
  font-size: 30px;
  font-weight: 800;
  line-height: 40px;
  text-align: center;
}

.user-ring {
  width: 120px;
  height: 120px;
  padding: 7px 0 0 6px;
  border: 4px solid #4f98b0;
  border-radius: 50%;
  display: flex;
  align-items: flex-start;
  color: #fff;
  font-size: 32px;
  line-height: 32px;
}

.broken-img {
  width: 26px;
  height: 24px;
  flex: none;
}

.user-alt {
  margin-left: 2px;
}

.panels {
  height: 1718px;
  display: grid;
  grid-template-columns: 703px 1389px 546px;
  column-gap: 16px;
}

.left-col {
  display: flex;
  flex-direction: column;
  gap: 8px;
}

.panel {
  background-color: #38727f;
  border-radius: 24px;
}

.panel-channels {
  height: 863px;
  flex: none;
  padding: 30px 0 0;
}

.panel-personal {
  flex: 1;
  padding: 30px 0 0;
}

.panel-title {
  padding-left: 24px;
  color: #93d8e0;
  font-size: 36px;
  font-weight: 700;
  line-height: 44px;
}

.search {
  height: 80px;
  background-color: #bfecee;
  display: flex;
  align-items: center;
  border-radius: 24px;
}

.search input {
  flex: 1;
  min-width: 0;
  font-size: 31.500px;
}

.search-icon {
  width: 36px;
  height: 36px;
  flex: none;
  color: #000;
}

.search-icon-small {
  width: 32px;
  height: 32px;
}

.channel-tools {
  height: 80px;
  margin: 14px 31px 0 29px;
  display: flex;
  gap: 11px;
}

.search-channels {
  width: 524px;
  padding-left: 22px;
  border-radius: 24px 0 0 24px;
}

.search-channels input {
  margin-left: 31px;
}

.add-channel {
  width: 108px;
  height: 80px;
  background-color: #bfecee;
  border-radius: 0 28px 28px 0;
  display: flex;
  align-items: center;
  justify-content: center;
}

.search-dms {
  margin: 14px 24px 0;
  padding-left: 22px;
}

.search-dms input {
  margin-left: 29px;
}

.list {
  position: relative;
  margin-left: 40px;
  width: 638px;
  overflow: hidden;
  display: flex;
  flex-direction: column;
  gap: 8px;
  padding: 4px 39px 0 0;
}

.list-channels {
  height: 655px;
  margin-top: 16px;
}

.list-dms {
  height: 636px;
  margin-top: 16px;
}

.row {
  display: flex;
  align-items: center;
  gap: 16px;
  flex: none;
}

.avatar {
  width: 90px;
  height: 90px;
  flex: none;
  border-radius: 50%;
  background-color: #93d8e0;
  display: flex;
  align-items: center;
  justify-content: center;
}

.avatar svg {
  width: 90px;
  height: 90px;
}

.avatar-tall {
  height: 104px;
}

.card {
  flex: 1;
  height: 104px;
  padding: 4px 0 0 16px;
  background-color: #dcf5f7;
  border-radius: 28px;
}

.card-name {
  color: #000;
  font-size: 40px;
  font-weight: 700;
  line-height: 48px;
}

.card-last {
  margin-top: 8px;
  color: #6b7280;
  font-size: 32px;
  line-height: 40px;
}

/* Drawn over the scrolling lists */
.thumb {
  position: absolute;
  top: 0;
  right: 0;
  width: 23px;
  border-radius: 12px;
  background-color: #888;
}

.thumb-channels {
  height: 546px;
}

.thumb-dms {
  height: 604px;
}

.thumb-chat {
  top: 54px;
  right: 0;
  width: 24px;
  height: 1369px;
}

.thumb-users {
  width: 24px;
  height: 1492px;
}

/* Chat */
.panel-chat {
  padding: 24px 24px 24px;
  display: flex;
  flex-direction: column;
}

.chat-head {
  height: 128px;
  flex: none;
  padding: 0 56px 0 16px;
  background-color: #dcf5f7;
  border-radius: 28px;
  display: flex;
  align-items: center;
}

.chat-head-avatar {
  width: 90px;
  height: 90px;
  flex: none;
  border: 2px solid #38727f;
  border-radius: 50%;
  display: flex;
  align-items: center;
  justify-content: center;
}

.chat-head-avatar svg {
  width: 90px;
  height: 90px;
  flex: none;
}

.chat-head-text {
  margin-left: 40px;
}

.chat-head-name {
  font-size: 36px;
  font-weight: 700;
  line-height: 44px;
}

.chat-head-sub {
  margin-top: 10px;
  color: #6b7280;
  font-size: 32px;
  line-height: 40px;
}

.dots {
  width: 14px;
  height: 52px;
  margin-left: auto;
  flex: none;
  fill: #000;
}

.messages {
  position: relative;
  flex: 1;
  min-height: 0;
  margin-top: 24px;
  padding: 0 56px 0 32px;
  overflow: hidden;
}

.msg {
  display: flex;
  align-items: flex-end;
  gap: 16px;
  margin-top: 8px;
}

.msg-cut {
  margin-top: -1px;
}

.msg-group {
  margin-top: 24px;
}

.msg-mine {
  flex-direction: row-reverse;
}

.msg-avatar {
  width: 68px;
  height: 68px;
  margin-bottom: 16px;
  flex: none;
  border-radius: 50%;
  background-color: #56b6c6;
  display: flex;
  align-items: center;
  justify-content: center;
}

.msg-avatar svg {
  width: 68px;
  height: 68px;
}

.msg-avatar-none {
  background: none;
}

.bubble {
  width: 512px;
  padding: 8px 8px 8px 40px;
  background-color: #e2e7ef;
  border-radius: 32px;
  font-size: 24px;
  line-height: 32px;
  color: #000;
}

.bubble h4 {
  margin-bottom: 8px;
  font-size: 24px;
  font-weight: 700;
}

.bubble p {
  padding-right: 32px;
}

.bubble time {
  display: block;
  margin-top: 8px;
  color: #9ca3af;
  font-size: 24.500px;
  text-align: right;
}

.bubble-tail {
  border-bottom-left-radius: 0;
}

.msg-mine .bubble-tail {
  border-bottom-left-radius: 32px;
  border-bottom-right-radius: 0;
}

.bubble-cut {
  border-radius: 0 0 32px 0;
}

.composer {
  height: 71px;
  margin-top: 24px;
  flex: none;
  display: flex;
  gap: 17px;
}

.composer input {
  flex: 1;
  min-width: 0;
  background-color: #dcf5f7;
  border-radius: 28px;
  font-size: 32px;
  text-align: center;
}

.composer button {
  width: 177px;
  background-color: #dcf5f7;
  border-radius: 28px;
  display: flex;
  align-items: center;
  justify-content: center;
}

/* Users */
.panel-users {
  position: relative;
  padding: 16px 40px 0 16px;
  overflow: hidden;
}

.search-users {
  padding-left: 22px;
}

.search-users input {
  margin-left: 29px;
}

.group-label {
  height: 32px;
  margin-top: 28px;
  padding: 0 8px 0 8px;
  display: flex;
  align-items: center;
  gap: 10px;
  color: #24505f;
  font-size: 24px;
  font-weight: 700;
}

.group-label i {
  flex: 1;
  height: 8px;
  border-radius: 4px;
  background-color: #24505f;
}

.user-rows {
  margin-top: 12px;
  display: flex;
  flex-direction: column;
  gap: 8px;
}

.user-row {
  height: 88px;
  flex: none;
  display: flex;
  align-items: center;
  gap: 16px;
}

.user-row .avatar {
  margin: -1px 0;
}

.user-card {
  flex: 1;
  height: 88px;
  padding: 0 41px 2px 16px;
  background-color: #dcf5f7;
  border-radius: 28px;
  display: flex;
  align-items: center;
  font-size: 40px;
  font-weight: 700;
  color: #000;
}
```
